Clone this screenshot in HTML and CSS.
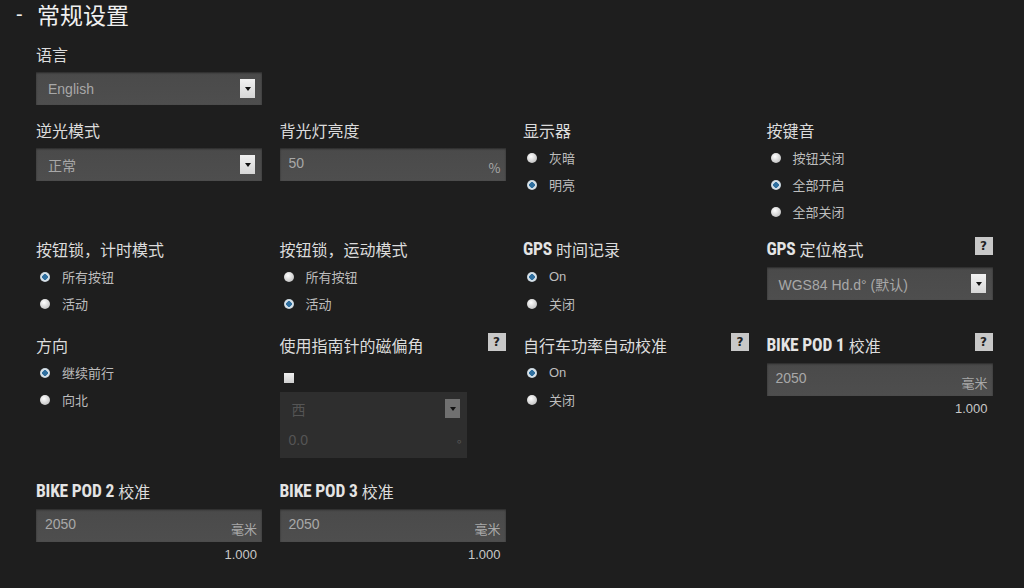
FILE: index.html
```html
<!DOCTYPE html>
<html lang="zh">
<head>
<meta charset="utf-8">
<link rel="stylesheet" href="styles.css">
</head>
<body>
<div class="page">
  <h1 class="title"><span class="dash">-</span><span>常规设置</span></h1>

  <div class="row row1">
    <div class="cell">
      <div class="label">语言</div>
      <div class="select"><span class="val">English</span><span class="arrow"></span></div>
    </div>
  </div>

  <div class="row row2">
    <div class="cell">
      <div class="label">逆光模式</div>
      <div class="select"><span class="val">正常</span><span class="arrow"></span></div>
    </div>
    <div class="cell">
      <div class="label">背光灯亮度</div>
      <div class="input"><span class="val">50</span><span class="unit">%</span></div>
    </div>
    <div class="cell">
      <div class="label">显示器</div>
      <div class="radios">
        <div class="radio"><span class="dot"></span>灰暗</div>
        <div class="radio"><span class="dot on"></span>明亮</div>
      </div>
    </div>
    <div class="cell">
      <div class="label">按键音</div>
      <div class="radios">
        <div class="radio"><span class="dot"></span>按钮关闭</div>
        <div class="radio"><span class="dot on"></span>全部开启</div>
        <div class="radio"><span class="dot"></span>全部关闭</div>
      </div>
    </div>
  </div>

  <div class="row row3">
    <div class="cell">
      <div class="label">按钮锁，计时模式</div>
      <div class="radios">
        <div class="radio"><span class="dot on"></span>所有按钮</div>
        <div class="radio"><span class="dot"></span>活动</div>
      </div>
    </div>
    <div class="cell">
      <div class="label">按钮锁，运动模式</div>
      <div class="radios">
        <div class="radio"><span class="dot"></span>所有按钮</div>
        <div class="radio"><span class="dot on"></span>活动</div>
      </div>
    </div>
    <div class="cell">
      <div class="label"><span class="cond">GPS</span> 时间记录</div>
      <div class="radios">
        <div class="radio"><span class="dot on"></span>On</div>
        <div class="radio"><span class="dot"></span>关闭</div>
      </div>
    </div>
    <div class="cell">
      <div class="label"><span class="cond">GPS</span> 定位格式<span class="help">?</span></div>
      <div class="select"><span class="val">WGS84 Hd.d° (默认)</span><span class="arrow"></span></div>
    </div>
  </div>

  <div class="row row4">
    <div class="cell">
      <div class="label">方向</div>
      <div class="radios">
        <div class="radio"><span class="dot on"></span>继续前行</div>
        <div class="radio"><span class="dot"></span>向北</div>
      </div>
    </div>
    <div class="cell">
      <div class="label">使用指南针的磁偏角<span class="help">?</span></div>
      <div class="check"><span class="box"></span></div>
      <div class="select disabled narrow"><span class="val">西</span><span class="arrow"></span></div>
      <div class="input disabled narrow"><span class="val">0.0</span><span class="unit">°</span></div>
    </div>
    <div class="cell">
      <div class="label">自行车功率自动校准<span class="help">?</span></div>
      <div class="radios">
        <div class="radio"><span class="dot on"></span>On</div>
        <div class="radio"><span class="dot"></span>关闭</div>
      </div>
    </div>
    <div class="cell">
      <div class="label"><span class="cond">BIKE POD 1</span> 校准<span class="help">?</span></div>
      <div class="input"><span class="val">2050</span><span class="unit">毫米</span></div>
      <div class="factor">1.000</div>
    </div>
  </div>

  <div class="row row5">
    <div class="cell">
      <div class="label"><span class="cond">BIKE POD 2</span> 校准</div>
      <div class="input"><span class="val">2050</span><span class="unit">毫米</span></div>
      <div class="factor">1.000</div>
    </div>
    <div class="cell">
      <div class="label"><span class="cond">BIKE POD 3</span> 校准</div>
      <div class="input"><span class="val">2050</span><span class="unit">毫米</span></div>
      <div class="factor">1.000</div>
    </div>
  </div>
</div>
</body>
</html>
```

FILE: styles.css
```css
html, body {
  margin: 0;
  padding: 0;
  background: #1e1e1e;
  height: 100%;
}

body {
  font-family: "Liberation Sans", "Noto Sans CJK SC", sans-serif;
  color: #d8d8d8;
  overflow: hidden;
}

.page {
  padding: 1px 0 0 36px;
}

.title {
  margin: 0 0 0 -20px;
  height: 26px;
  font-family: "Noto Sans CJK SC", sans-serif;
  font-weight: 400;
  font-size: 23px;
  line-height: 26px;
  color: #f0f0f0;
  display: flex;
}

.dash {
  width: 21px;
  font-family: "Liberation Sans", sans-serif;
  font-size: 20px;
}

.row {
  display: grid;
  grid-template-columns: repeat(4, 226px);
  column-gap: 17.5px;
  align-items: start;
}

.row1 { margin-top: 17px; }
.row2 { margin-top: 15px; }
.row3 { margin-top: 14px; }
.row4 { margin-top: 18px; }
.row5 { margin-top: 23px; }

.cell {
  display: flex;
  flex-direction: column;
}

.label {
  height: 20px;
  line-height: 20px;
  font-size: 16px;
  font-family: "Noto Sans CJK SC", sans-serif;
  color: #dcdcdc;
  display: flex;
  align-items: center;
  white-space: nowrap;
  margin-bottom: 8px;
}

.cond {
  font-family: "Roboto Condensed", Roboto, sans-serif;
  font-weight: bold;
  font-size: 17.5px;
  letter-spacing: -0.2px;
  margin-right: 4px;
  color: #e4e4e4;
}

.help {
  margin-left: auto;
  width: 18px;
  height: 18px;
  background: #c8c8c8;
  color: #222;
  font-family: "DejaVu Sans", sans-serif;
  font-weight: bold;
  font-size: 12px;
  line-height: 18px;
  text-align: center;
  margin-top: -6px;
}

.select, .input {
  position: relative;
  height: 33px;
  background: linear-gradient(#4a4a4a, #4e4e4e);
  box-shadow: inset 0 1px 2px rgba(0,0,0,0.45);
  display: flex;
  align-items: center;
  padding: 0 7px 0 12px;
  box-sizing: border-box;
  font-size: 14px;
  color: #a8a8a8;
}

.input {
  padding: 0 5px 0 9px;
}

.input .val {
  margin-top: -4px;
}

.val {
  flex: 1;
  white-space: nowrap;
}

.select .val {
  font-family: "Liberation Sans", "Noto Sans CJK SC", sans-serif;
}

.unit {
  font-size: 13px;
  color: #a8a8a8;
  margin-top: 6px;
  font-family: "Noto Sans CJK SC", sans-serif;
}

.arrow {
  width: 15px;
  height: 19px;
  background: linear-gradient(#f2f2f2, #d6d6d6);
  position: relative;
}

.arrow::after {
  content: "";
  position: absolute;
  left: 5px;
  top: 8px;
  border-left: 3px solid transparent;
  border-right: 3px solid transparent;
  border-top: 4px solid #111;
}

.disabled {
  background: #2e2e2e;
  box-shadow: none;
  color: #555;
}

.disabled .arrow {
  background: #707070;
}

.disabled .unit {
  color: #555;
}

.narrow {
  width: 187px;
}

.radios {
  display: flex;
  flex-direction: column;
  margin-top: -4px;
}

.radio {
  height: 27px;
  display: flex;
  align-items: center;
  font-size: 13px;
  font-family: "Liberation Sans", "Noto Sans CJK SC", sans-serif;
  color: #bdbdbd;
}

.dot {
  width: 10px;
  height: 10px;
  border-radius: 50%;
  margin: 0 12px 0 4px;
  background: radial-gradient(circle at 40% 35%, #ffffff, #c8c8c8 70%, #9a9a9a);
  box-sizing: border-box;
}

.dot.on {
  background: radial-gradient(circle, #2f6f9f 0 2.6px, #dfe8ee 3px, #a9bac6 100%);
}

.check {
  height: 28px;
  display: flex;
  align-items: center;
  margin-top: 1px;
}

.box {
  width: 10px;
  height: 10px;
  margin-left: 4px;
  background: linear-gradient(#f0f0f0, #cfcfcf);
}

.factor {
  text-align: right;
  padding-right: 5px;
  margin-top: 5px;
  font-size: 13px;
  color: #c8c8c8;
}
```
